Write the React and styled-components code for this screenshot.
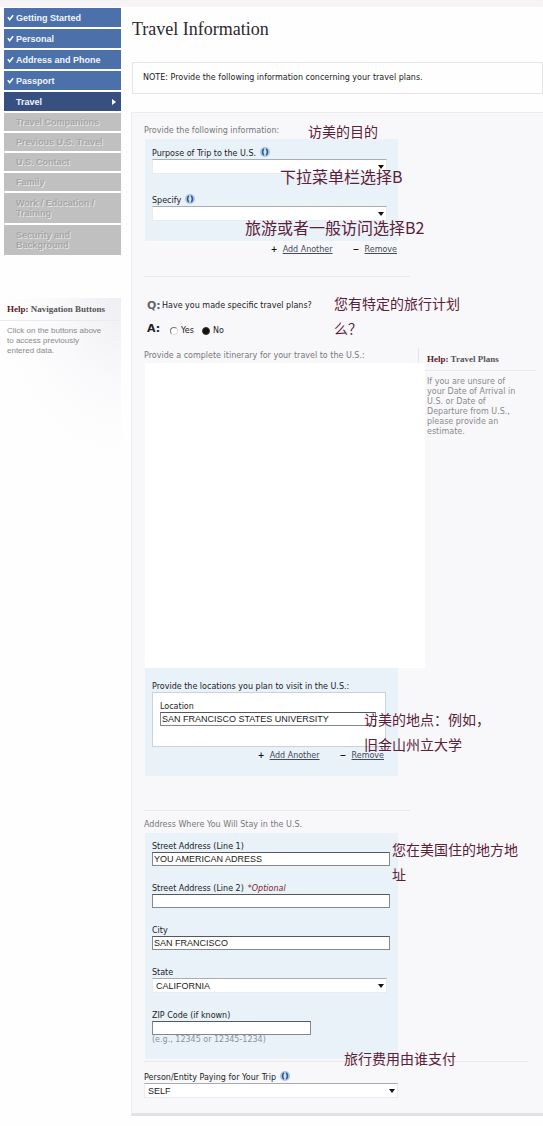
import React, { useState } from "react";
import styled, { createGlobalStyle } from "styled-components";

const steps = [
  { name: "Getting Started", status: "done" },
  { name: "Personal", status: "done" },
  { name: "Address and Phone", status: "done" },
  { name: "Passport", status: "done" },
  { name: "Travel", status: "current" },
  { name: "Travel Companions", status: "pending" },
  { name: "Previous U.S. Travel", status: "pending" },
  { name: "U.S. Contact", status: "pending" },
  { name: "Family", status: "pending" },
  { name: "Work / Education / Training", status: "pending", tall: true },
  { name: "Security and Background", status: "pending", tall: true },
];

const InfoIcon = () => (
  <InfoSvg viewBox="0 0 20 20" aria-hidden="true">
    <circle cx="10" cy="10" r="10" fill="#a9c4e6" />
    <path
      d="M8 4C4 6 4 14 8 16M12 4c4 2 4 10 0 12"
      fill="none"
      stroke="#2d568f"
      strokeWidth="3"
    />
    <path d="M10 5v10" stroke="#e6eef9" strokeWidth="3" />
  </InfoSvg>
);

const Field = ({ id, label, info, optional, children }) => (
  <FieldBox>
    <Label htmlFor={id}>
      {label}
      {optional && <Optional>*Optional</Optional>}
      {info && <InfoIcon />}
    </Label>
    {children}
  </FieldBox>
);

const DropDown = ({ id, options, wide }) => (
  <SelectBox $wide={wide}>
    <Select id={id}>
      {options.map((option) => (
        <option key={option}>{option}</option>
      ))}
    </Select>
    <Arrow viewBox="0 0 6 4" aria-hidden="true">
      <path d="M0 0h6L3 4z" fill="#111" />
    </Arrow>
  </SelectBox>
);

const AddRemove = ({ inset }) => (
  <LinkRow $inset={inset}>
    <Sign aria-hidden="true">+</Sign>
    <TextLink href="#add">Add Another</TextLink>
    <Sign aria-hidden="true" $second>
      −
    </Sign>
    <TextLink href="#remove">Remove</TextLink>
  </LinkRow>
);

const App = () => {
  const [plans, setPlans] = useState("no");
  const [location, setLocation] = useState("SAN FRANCISCO STATES UNIVERSITY");
  const [address, setAddress] = useState({
    line1: "YOU AMERICAN ADRESS",
    line2: "",
    city: "SAN FRANCISCO",
    zip: "",
  });

  const changeAddress = (e) => {
    setAddress({ ...address, [e.target.id]: e.target.value });
  };

  return (
    <>
      <GlobalStyle />
      <TopStrip />
      <Page>
        <Sidebar>
          <StepList>
            {steps.map(({ name, status, tall }) => (
              <Step
                key={name}
                $status={status}
                $tall={tall}
                disabled={status === "pending"}
              >
                <Mark>
                  {status === "done" && (
                    <CheckSvg viewBox="0 0 8 8" aria-hidden="true">
                      <path
                        d="M1 3.5l2 3L7 1.5"
                        fill="none"
                        stroke="#fff"
                        strokeWidth="1.8"
                      />
                    </CheckSvg>
                  )}
                </Mark>
                <StepName>{name}</StepName>
                {status === "current" && (
                  <CurrentSvg viewBox="0 0 4 6" aria-hidden="true">
                    <path d="M0 0l4 3-4 3z" fill="#fff" />
                  </CurrentSvg>
                )}
              </Step>
            ))}
          </StepList>
          <NavHelp>
            <HelpTitle>
              <b>Help:</b> Navigation Buttons
            </HelpTitle>
            <NavHelpText>
              Click on the buttons above to access previously entered data.
            </NavHelpText>
          </NavHelp>
        </Sidebar>

        <Main>
          <Title>Travel Information</Title>
          <Note>
            NOTE: Provide the following information concerning your travel
            plans.
          </Note>

          <Panel>
            <Section>
              <Caption>Provide the following information:</Caption>
              <FormBox $gap={22} $top={10} $bottom={20}>
                <Field id="purpose" label="Purpose of Trip to the U.S." info>
                  <DropDown id="purpose" options={[""]} />
                </Field>
                <Field id="specify" label="Specify" info>
                  <DropDown id="specify" options={[""]} />
                </Field>
              </FormBox>
              <AddRemove inset={28} />
              <Annotation $top={6} $left={164}>
                访美的目的
              </Annotation>
              <Annotation $top={51} $left={136} $large>
                下拉菜单栏选择B
              </Annotation>
              <Annotation $top={102} $left={101} $large>
                旅游或者一般访问选择B2
              </Annotation>
            </Section>
            <Divider $top={21} />

            <Section>
              <Question>
                <Letter $muted>Q:</Letter>
                Have you made specific travel plans?
              </Question>
              <Answer>
                <Letter>A:</Letter>
                <RadioLabel>
                  <Radio
                    type="radio"
                    name="plans"
                    checked={plans === "yes"}
                    onChange={() => setPlans("yes")}
                  />
                  Yes
                </RadioLabel>
                <RadioLabel>
                  <Radio
                    type="radio"
                    name="plans"
                    checked={plans === "no"}
                    onChange={() => setPlans("no")}
                  />
                  No
                </RadioLabel>
              </Answer>
              <Annotation $top={6} $left={190}>
                您有特定的旅行计划
                <br />
                么？
              </Annotation>
            </Section>

            <ItineraryRow>
              <Itinerary>
                <ItineraryCaption>
                  Provide a complete itinerary for your travel to the U.S.:
                </ItineraryCaption>
                <Blank />
              </Itinerary>
              <TravelHelp>
                <HelpTitle>
                  <b>Help:</b> Travel Plans
                </HelpTitle>
                <TravelHelpText>
                  If you are unsure of your Date of Arrival in U.S. or Date of
                  Departure from U.S., please provide an estimate.
                </TravelHelpText>
              </TravelHelp>
            </ItineraryRow>

            <Section>
              <FormBox $gap={0} $top={14} $bottom={15}>
                <Label as="div">
                  Provide the locations you plan to visit in the U.S.:
                </Label>
                <LocationBox>
                  <Field id="location" label="Location">
                    <Input
                      id="location"
                      value={location}
                      onChange={(e) => setLocation(e.target.value)}
                    />
                  </Field>
                </LocationBox>
                <AddRemove inset={6} />
              </FormBox>
              <Annotation $top={52} $left={220}>
                访美的地点：例如，
                <br />
                旧金山州立大学
              </Annotation>
            </Section>
            <Divider $top={34} />

            <Section>
              <AddressCaption>
                Address Where You Will Stay in the U.S.
              </AddressCaption>
              <FormBox $gap={18} $top={9} $bottom={14}>
                <Field id="line1" label="Street Address (Line 1)">
                  <Input
                    id="line1"
                    value={address.line1}
                    onChange={changeAddress}
                  />
                </Field>
                <Field id="line2" label="Street Address (Line 2)" optional>
                  <Input
                    id="line2"
                    value={address.line2}
                    onChange={changeAddress}
                  />
                </Field>
                <Field id="city" label="City">
                  <Input
                    id="city"
                    value={address.city}
                    onChange={changeAddress}
                  />
                </Field>
                <Field id="state" label="State">
                  <DropDown id="state" options={["CALIFORNIA"]} />
                </Field>
                <Field id="zip" label="ZIP Code (if known)">
                  <Input
                    id="zip"
                    $short
                    value={address.zip}
                    onChange={changeAddress}
                  />
                  <Hint>(e.g., 12345 or 12345-1234)</Hint>
                </Field>
              </FormBox>
              <Annotation $top={39} $left={248}>
                您在美国住的地方地
                <br />
                址
              </Annotation>
              <Annotation $top={248} $left={200}>
                旅行费用由谁支付
              </Annotation>
            </Section>
            <Divider $top={2} $full />

            <PayerSection>
              <Field id="payer" label="Person/Entity Paying for Your Trip" info>
                <DropDown id="payer" options={["SELF"]} wide />
              </Field>
            </PayerSection>
          </Panel>
        </Main>
      </Page>
    </>
  );
};

const GlobalStyle = createGlobalStyle`
  * {
    box-sizing: border-box;
  }
  body {
    margin: 0;
    background: #fefefe;
    color: #222;
    font-family: "DejaVu Sans", "Noto Sans CJK SC", sans-serif;
    font-size: 8px;
    line-height: 10px;
  }
`;

const TopStrip = styled.div`
  height: 7px;
  background: linear-gradient(#f5f2f4, #f8f6f7);
`;

const Page = styled.div`
  display: flex;
  align-items: stretch;
  padding-bottom: 12px;
`;

const Sidebar = styled.aside`
  flex: 0 0 131px;
  padding: 1px 10px 0 0;
`;

const StepList = styled.nav`
  display: flex;
  flex-direction: column;
  gap: 2px;
  padding-left: 4px;
`;

const stepColors = {
  done: "#4c70aa",
  current: "#38507f",
  pending: "#c0c0c0",
};

const stepHeight = ({ $status, $tall }) => {
  if ($tall) {
    return "30px";
  }
  return $status === "pending" ? "18px" : "19px";
};

const Step = styled.button`
  display: flex;
  align-items: center;
  min-height: ${stepHeight};
  padding: 0 3px;
  border: 0;
  background: ${({ $status }) => stepColors[$status]};
  color: ${({ $status }) => ($status === "pending" ? "#a6a6a6" : "#f0f5ff")};
  text-shadow: ${({ $status }) =>
    $status === "pending" ? "1px 1px 0 #e4e4e4" : "none"};
  font: bold 9px/10px "Liberation Sans", sans-serif;
  text-align: left;
`;

const Mark = styled.span`
  display: flex;
  flex: 0 0 9px;
`;

const CheckSvg = styled.svg`
  width: 7px;
  height: 7px;
`;

const StepName = styled.span`
  flex: 1;
  max-width: 92px;
`;

const CurrentSvg = styled.svg`
  width: 4px;
  height: 6px;
  margin: 0 2px 0 auto;
`;

const NavHelp = styled.section`
  min-height: 160px;
  margin-top: 43px;
  padding-top: 5px;
  background: radial-gradient(
    ellipse at top right,
    #efeff3 0%,
    #fafafc 40%,
    #fefefe 70%
  );
`;

const HelpTitle = styled.h2`
  margin: 0;
  padding: 0 0 5px 7px;
  border-bottom: 1px solid #ebebee;
  color: #555;
  font: bold 9px/12px "Liberation Serif", serif;

  b {
    color: #5a1a26;
  }
`;

const NavHelpText = styled.p`
  margin: 5px 0 0;
  padding: 0 18px 0 7px;
  color: #8a8a8a;
  font-family: "Liberation Sans", sans-serif;
`;

const Main = styled.main`
  flex: 1;
  min-width: 0;
`;

const Title = styled.h1`
  margin: 0;
  padding: 12px 0 23px 1px;
  color: #2a2a2e;
  font: normal 18px/20px "Liberation Serif", serif;
`;

const Note = styled.p`
  margin: 0 0 18px 1px;
  padding: 10px;
  border: 1px solid #e6e4e8;
`;

const Panel = styled.div`
  padding: 13px 0 15px 12px;
  border: solid #ededf0;
  border-width: 1px 0 3px 1px;
  border-bottom-color: #e2e2e5;
  background: #f8f8fb;
`;

const Section = styled.section`
  position: relative;
  margin-right: 118px;
`;

const Caption = styled.div`
  margin-bottom: 3px;
  color: #777;
`;

const AddressCaption = styled(Caption)`
  padding-top: 9px;
`;

const FormBox = styled.div`
  display: flex;
  flex-direction: column;
  gap: ${({ $gap }) => $gap}px;
  margin: 0 27px 0 1px;
  padding: ${({ $top, $bottom }) => `${$top}px 8px ${$bottom}px 7px`};
  background: #e9f1f9;
`;

const FieldBox = styled.div`
  display: flex;
  flex-direction: column;
`;

const Label = styled.label`
  display: flex;
  align-items: center;
  height: 10px;
  white-space: nowrap;
`;

const Optional = styled.em`
  margin-left: 4px;
  color: #7a2430;
`;

const InfoSvg = styled.svg`
  width: 10px;
  height: 10px;
  margin: -4px 0 0 4px;
`;

const Input = styled.input`
  width: ${({ $short }) => ($short ? "67%" : "100%")};
  height: 14px;
  padding: 0 1px;
  border: 1px solid #85888c;
  border-top-color: #55585c;
  background: #fff;
  color: #222;
  font: 9px/12px "Liberation Sans", sans-serif;
`;

const SelectBox = styled.div`
  position: relative;
  margin-right: ${({ $wide }) => ($wide ? "0" : "3px")};
`;

const Select = styled.select`
  display: block;
  width: 100%;
  height: 15px;
  padding: 0 3px;
  border: 1px solid #e9ebef;
  border-top-color: #a9acb0;
  border-radius: 0;
  background: #fff;
  color: #222;
  font: 9px/12px "Liberation Sans", sans-serif;
  appearance: none;
`;

const Arrow = styled.svg`
  position: absolute;
  top: 6px;
  right: 3px;
  width: 6px;
  height: 4px;
  pointer-events: none;
`;

const LinkRow = styled.div`
  display: flex;
  justify-content: flex-end;
  padding: 4px ${({ $inset }) => $inset}px 0 0;
`;

const Sign = styled.span`
  width: 12px;
  margin-left: ${({ $second }) => ($second ? "20px" : "0")};
  color: #111;
  font-weight: bold;
  line-height: 9px;
`;

const TextLink = styled.a`
  color: #444a58;
  text-decoration: underline;
`;

const Divider = styled.hr`
  height: 1px;
  margin: ${({ $top, $full }) => `${$top}px ${$full ? 15 : 133}px 0 0`};
  border: 0;
  background: #e9e9ec;
`;

const Question = styled.div`
  display: flex;
  align-items: center;
  height: 16px;
  margin-top: 21px;
  padding-left: 3px;
`;

const Answer = styled(Question)`
  gap: 3px;
  margin-top: 7px;
`;

const Letter = styled.span`
  width: 15px;
  color: ${({ $muted }) => ($muted ? "#666" : "#222")};
  font-size: 11px;
  font-weight: bold;
`;

const RadioLabel = styled.label`
  display: flex;
  align-items: center;
  gap: 3px;
  padding: 4px 0 0 5px;
`;

const Radio = styled.input`
  width: 8px;
  height: 8px;
  margin: 0;
  border: 1px solid #ddd;
  border-top-color: #777;
  border-left-color: #777;
  border-radius: 50%;
  background: #fff;
  appearance: none;

  &:checked {
    border-color: #333;
    background: #111;
  }
`;

const ItineraryRow = styled.div`
  display: flex;
  margin-top: 11px;
`;

const Itinerary = styled.div`
  flex: 1;
`;

const ItineraryCaption = styled.div`
  margin-right: 6px;
  padding: 3px 0 2px;
  border-right: 1px solid #e4e4e7;
  color: #777;
`;

const Blank = styled.div`
  height: 305px;
  margin-left: 1px;
  background: #fff;
`;

const TravelHelp = styled.aside`
  flex: 0 0 118px;
  padding-top: 5px;

  ${HelpTitle} {
    margin-right: 7px;
    padding-left: 2px;
  }
`;

const TravelHelpText = styled.p`
  margin: 6px 0 0;
  padding: 0 20px 0 2px;
  color: #8a8a8a;
`;

const LocationBox = styled.div`
  min-height: 55px;
  margin-right: 4px;
  padding: 9px 9px 0 7px;
  border: 1px solid #cdd2d8;
  background: #fff;
`;

const Hint = styled.span`
  color: #8d929a;
`;

const PayerSection = styled(Section)`
  margin-right: 145px;
  padding-top: 11px;
`;

// Translated notes laid over the form
const Annotation = styled.p`
  position: absolute;
  top: ${({ $top }) => $top - 13}px;
  left: ${({ $left }) => $left}px;
  margin: 0;
  color: #5c2036;
  font-family: "Noto Sans CJK SC", sans-serif;
  font-size: ${({ $large }) => ($large ? "16px" : "14px")};
  line-height: 25px;
  white-space: nowrap;
  pointer-events: none;
`;

export default App;
